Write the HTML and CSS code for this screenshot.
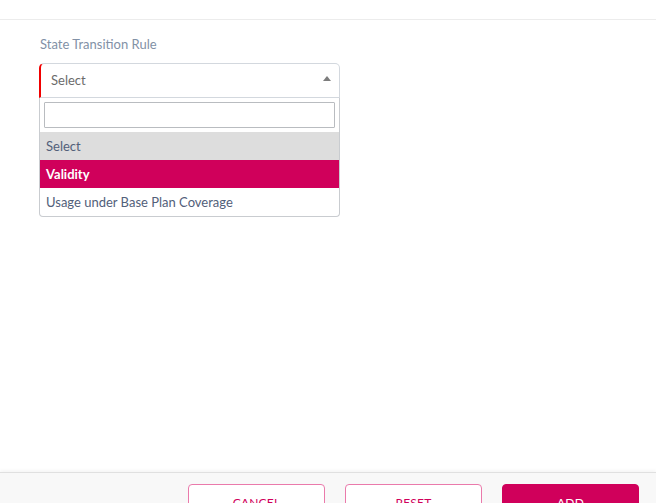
FILE: index.html
```html
<!DOCTYPE html>
<html lang="en">
<head>
<meta charset="utf-8">
<title>State Transition Rule</title>
<link rel="stylesheet" href="styles.css">
</head>
<body>
<div class="page">
  <div class="topbar"></div>
  <main class="content">
    <label class="field-label">State Transition Rule</label>
    <div class="select-wrap">
      <div class="select">
        <span class="select-value">Select</span>
        <span class="caret"></span>
      </div>
      <div class="dropdown">
        <div class="search-row"><input class="search" type="text"></div>
        <ul class="options">
          <li class="option option-current">Select</li>
          <li class="option option-active">Validity</li>
          <li class="option">Usage under Base Plan Coverage</li>
        </ul>
      </div>
    </div>
  </main>
  <footer class="footer">
    <button class="btn btn-outline">CANCEL</button>
    <button class="btn btn-outline">RESET</button>
    <button class="btn btn-primary">ADD</button>
  </footer>
</div>
</body>
</html>
```
FILE: styles.css
```css
* { box-sizing: border-box; }
html, body { margin: 0; padding: 0; }
body {
  font-family: Lato, "Open Sans", sans-serif;
  background: #ffffff;
  width: 656px;
  height: 503px;
  overflow: hidden;
}
.page {
  display: flex;
  flex-direction: column;
  height: 503px;
}
.topbar {
  height: 20px;
  border-bottom: 1px solid #ececec;
  flex: none;
}
.content {
  flex: 1;
  padding: 15px 0 0 39px;
}
.field-label {
  display: block;
  font-size: 13px;
  color: #8291a6;
  padding-left: 1px;
  line-height: 18px;
  margin-bottom: 10px;
}
.select-wrap {
  width: 301px;
}
.select {
  height: 35px;
  border: 1px solid #d3d8de;
  border-left: 2px solid #f00000;
  border-radius: 5px 5px 0 0;
  display: flex;
  align-items: center;
  justify-content: space-between;
  padding: 0 8px 2px 10px;
}
.select-value {
  font-size: 13px;
  color: #6b6b6b;
}
.caret {
  width: 0;
  height: 0;
  border-left: 4px solid transparent;
  border-right: 4px solid transparent;
  border-bottom: 5px solid #7d7d7d;
  margin-bottom: 3px;
}
.dropdown {
  border: 1px solid #c9ccd0;
  border-top: none;
  border-radius: 0 0 4px 4px;
  background: #fff;
}
.search-row {
  padding: 4px;
}
.search {
  display: block;
  width: 100%;
  height: 26px;
  border: 1px solid #b9bcc0;
  border-radius: 1px;
  background: #fff;
  margin: 0;
}
.options {
  list-style: none;
  margin: 0;
  padding: 0;
}
.option {
  height: 28px;
  line-height: 28px;
  padding-left: 6px;
  font-size: 13px;
  color: #52607a;
}
.option-current {
  background: #dddddd;
}
.option-active {
  background: #d0005b;
  color: #ffffff;
  font-weight: 700;
}
.footer {
  flex: none;
  height: 31px;
  background: #f8f8f8;
  border-top: 1px solid #e0e0e0;
  box-shadow: 0 -2px 3px rgba(0,0,0,0.04);
  display: flex;
  justify-content: flex-end;
  align-items: flex-start;
  gap: 20px;
  padding: 11px 17px 0 0;
  overflow: visible;
}
.btn {
  flex: none;
  width: 137px;
  height: 36px;
  border-radius: 4px;
  font-family: Lato, "Open Sans", sans-serif;
  font-size: 12px;
  letter-spacing: 0.2px;
  padding: 1px 0 0 0;
  cursor: pointer;
}
.btn-outline {
  background: #ffffff;
  border: 1px solid #ea7aab;
  color: #d0005b;
}
.btn-primary {
  background: #d0005b;
  border: 1px solid #d0005b;
  color: #ffffff;
}
```
